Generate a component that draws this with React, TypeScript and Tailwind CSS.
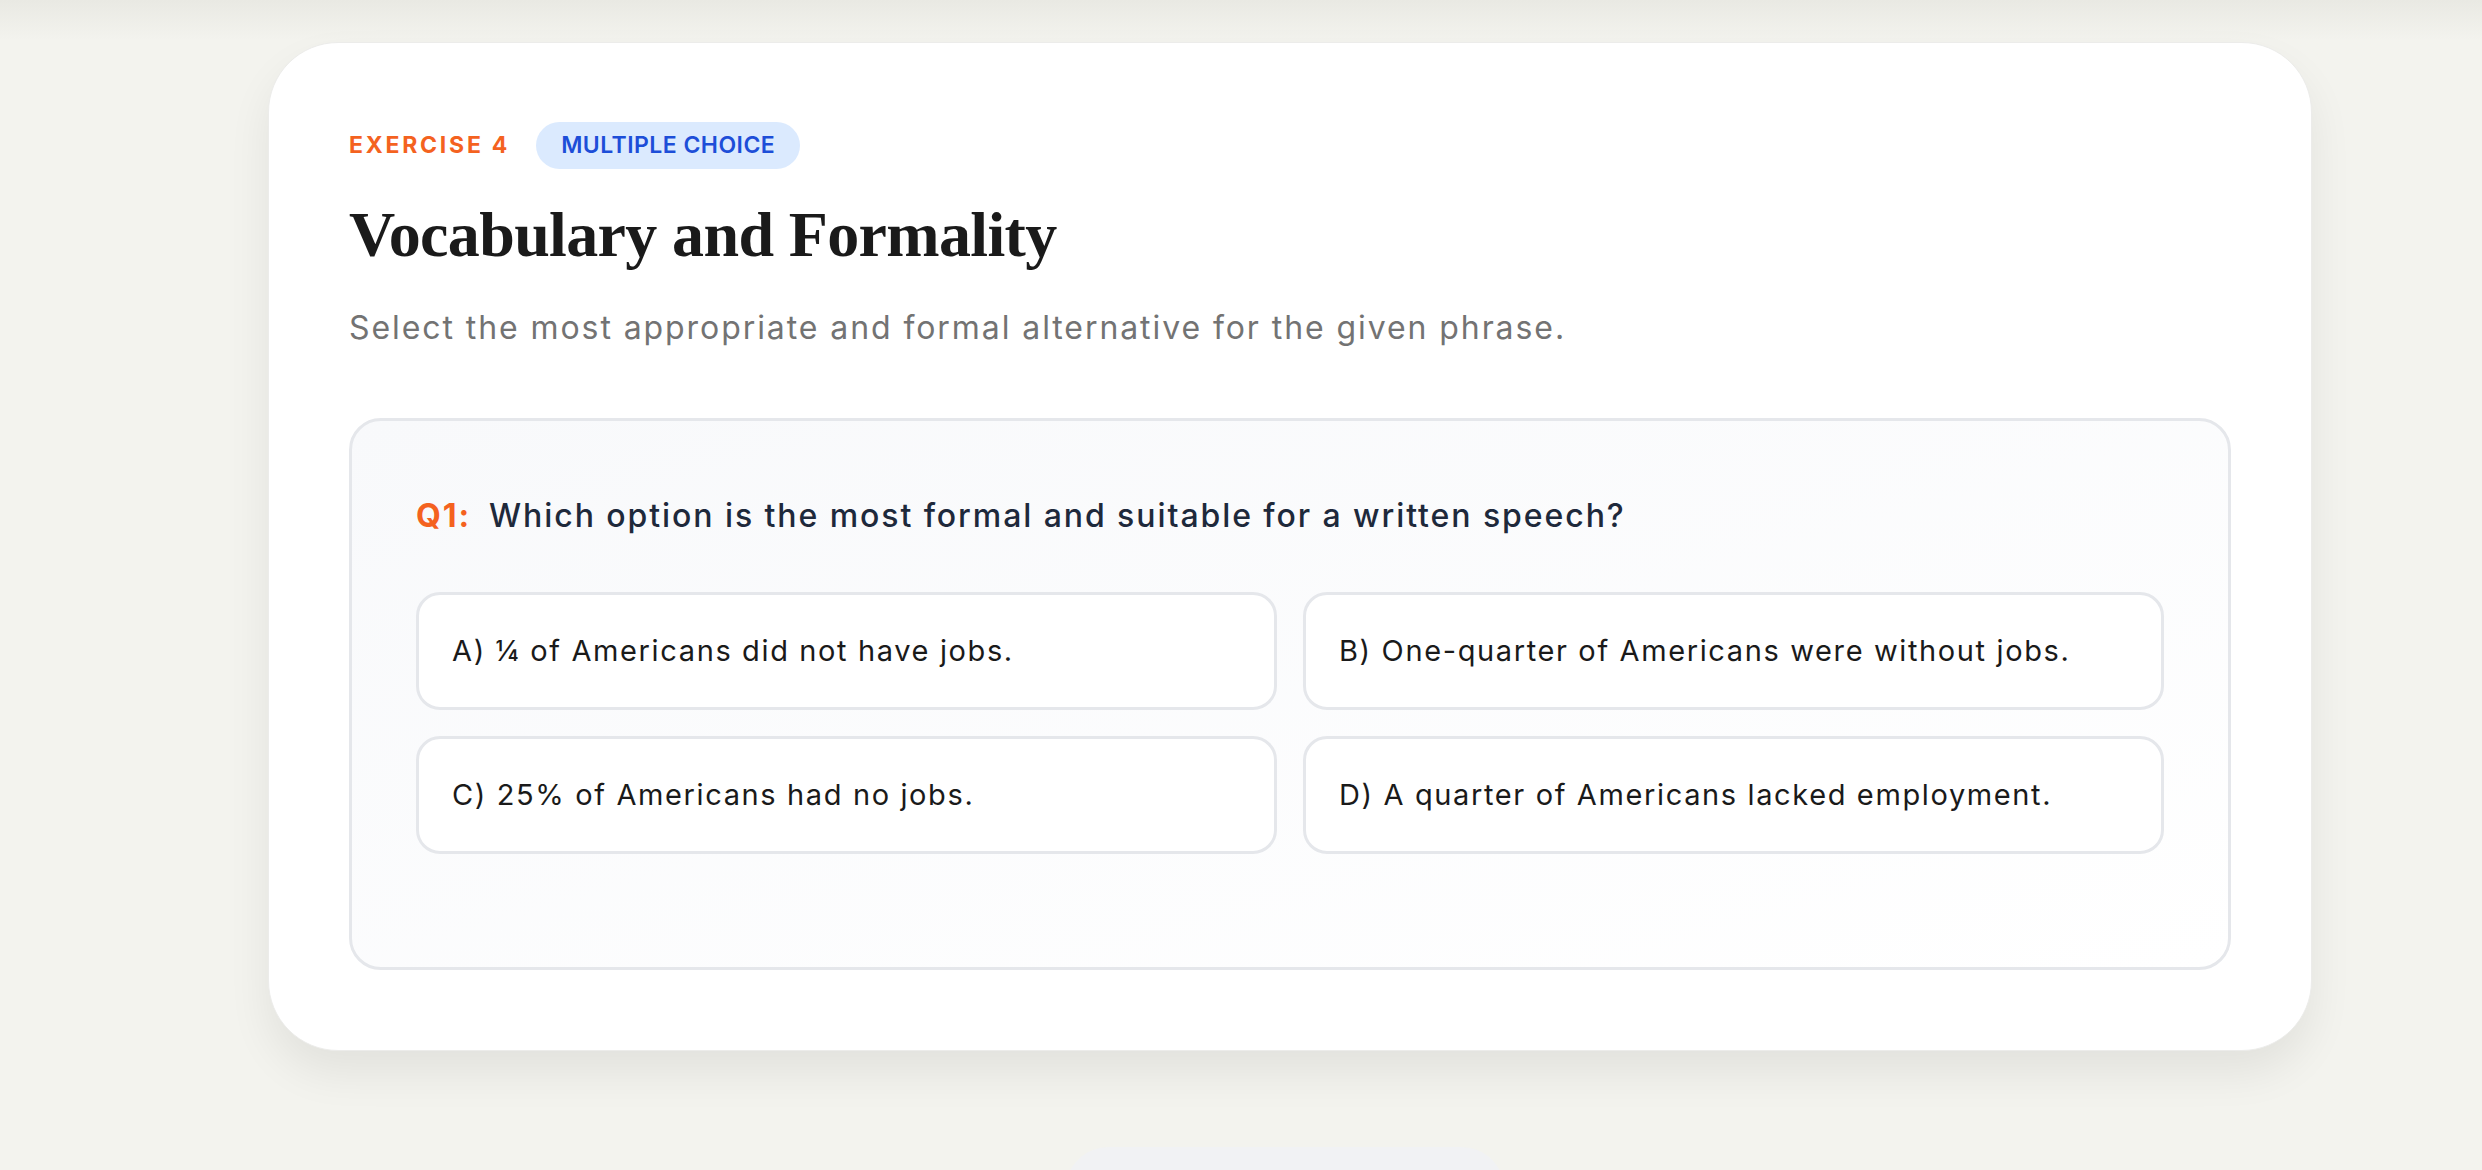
import React from 'react';

const options = [
  'A) ¼ of Americans did not have jobs.',
  'B) One-quarter of Americans were without jobs.',
  'C) 25% of Americans had no jobs.',
  'D) A quarter of Americans lacked employment.',
];

const sans = "font-['Inter','Noto_Sans',sans-serif]";

const App: React.FC = () => {
  return (
    <div className={`min-h-[1170px] w-full overflow-hidden bg-[#f3f3ee] bg-[linear-gradient(to_bottom,#e9e9e3_0px,#f3f3ee_40px)] ${sans}`}>
      <div className="pt-[42px] pl-[268px]">
        <div className="w-[2044px] rounded-[70px] border border-[#ececea] bg-white px-[80px] pt-[79px] pb-[80px] shadow-[0_22px_44px_rgba(0,0,0,0.07)]">
          <div className="flex items-center gap-[26px]">
            <span className="text-[23px] font-bold uppercase tracking-[0.12em] text-[#f4621f]">Exercise 4</span>
            <span className="flex h-[47px] items-center rounded-full bg-[#dbeafe] px-[25px] text-[23px] font-semibold tracking-[0.02em] text-[#1d4ed8]">
              MULTIPLE CHOICE
            </span>
          </div>

          <h1 className="mt-[26px] font-['Liberation_Serif','Times_New_Roman',serif] text-[64px] font-bold leading-[80px] tracking-[-0.01em] text-[#1a1a1a]">
            Vocabulary and Formality
          </h1>

          <p className="mt-[31px] text-[32px] leading-[44px] tracking-[0.06em] text-[#737373]">
            Select the most appropriate and formal alternative for the given phrase.
          </p>

          <div className="mt-[68px] rounded-[32px] border-[3px] border-[#e5e7eb] bg-linear-to-br from-[#f8f9fb] to-white px-[64px] pt-[71px] pb-[113px]">
            <div className="flex items-center gap-[18px] text-[32px] leading-[48px] tracking-[0.06em]">
              <span className="font-bold text-[#f4621f]">Q1:</span>
              <span className="font-medium text-[#1e293b]">
                Which option is the most formal and suitable for a written speech?
              </span>
            </div>

            <div className="mt-[52px] grid grid-cols-2 gap-[26px]">
              {options.map((opt) => (
                <div
                  key={opt}
                  className="rounded-[24px] border-[3px] border-[#e5e7eb] bg-white px-[33px] py-[34px] text-[29px] leading-[44px] tracking-[0.056em] text-[#1a1a1a]"
                >
                  {opt}
                </div>
              ))}
            </div>
          </div>
        </div>

        <div className="mt-[96px] ml-[797px] h-[60px] w-[440px] rounded-t-[44px] bg-[#f1f2f4]" />
      </div>
    </div>
  );
};

export default App;
